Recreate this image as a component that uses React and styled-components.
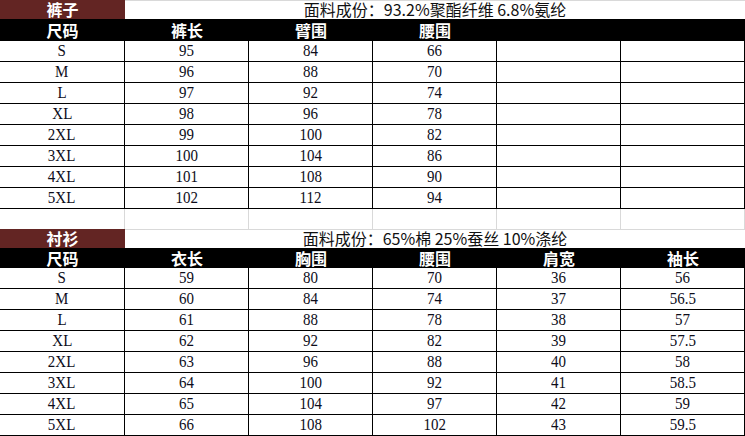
import React from 'react'
import styled, { createGlobalStyle } from 'styled-components'

const GlobalStyle = createGlobalStyle`
  html, body {
    margin: 0;
    padding: 0;
    background: #ffffff;
  }
  body {
    font-family: "Liberation Serif", "Noto Sans CJK SC", serif;
  }
`

const Sheet = styled.div`
  width: 745px;
  height: 436px;
  overflow: hidden;
  display: flex;
  flex-direction: column;
  background: #ffffff;
`

const TitleRow = styled.div`
  display: flex;
  height: 19px;
`

const TitleCell = styled.div`
  width: 125px;
  background-color: #632523;
  color: #ffffff;
  font-family: "Noto Sans CJK SC", sans-serif;
  font-weight: 700;
  font-size: 16px;
  line-height: 19px;
  text-align: center;
`

const FabricCell = styled.div`
  flex: 1;
  box-sizing: border-box;
  border-top: 1px solid #d9d9d9;
  color: #111111;
  font-family: "Noto Sans CJK SC", sans-serif;
  font-size: 16px;
  line-height: 17px;
  text-align: center;
  white-space: pre;
`

const HeaderRow = styled.div`
  display: flex;
  height: ${props => props.height}px;
  background-color: #000000;
`

const HeaderCell = styled.div`
  width: ${props => (props.first ? 125 : 124)}px;
  color: #ffffff;
  font-family: "Noto Sans CJK SC", sans-serif;
  font-weight: 700;
  font-size: 16px;
  line-height: ${props => props.height}px;
  text-align: center;
`

const DataRow = styled.div`
  display: flex;
  height: 21px;
`

const DataCell = styled.div`
  box-sizing: border-box;
  width: ${props => (props.first ? 125 : 124)}px;
  height: 21px;
  border-bottom: 1px solid #000000;
  border-right: 1px solid #000000;
  display: flex;
  align-items: center;
  justify-content: center;
`

const Value = styled.span`
  display: inline-block;
  font-family: "Liberation Serif", serif;
  font-size: 17px;
  line-height: 20px;
  color: #0d0d1a;
  transform: scaleX(0.88);
`

const SpacerRow = styled.div`
  display: flex;
  height: 20px;
`

const SpacerCell = styled.div`
  box-sizing: border-box;
  width: ${props => (props.first ? 125 : 124)}px;
  border-right: 1px solid #d9d9d9;
`

const pants = {
  title: '裤子',
  fabric: '面料成份：93.2%聚酯纤维 6.8%氨纶',
  headerHeight: 22,
  columns: ['尺码', '裤长', '臂围', '腰围', '', ''],
  rows: [
    ['S', '95', '84', '66', '', ''],
    ['M', '96', '88', '70', '', ''],
    ['L', '97', '92', '74', '', ''],
    ['XL', '98', '96', '78', '', ''],
    ['2XL', '99', '100', '82', '', ''],
    ['3XL', '100', '104', '86', '', ''],
    ['4XL', '101', '108', '90', '', ''],
    ['5XL', '102', '112', '94', '', ''],
  ],
}

const shirt = {
  title: '衬衫',
  fabric: '面料成份：65%棉 25%蚕丝 10%涤纶',
  headerHeight: 20,
  columns: ['尺码', '衣长', '胸围', '腰围', '肩宽', '袖长'],
  rows: [
    ['S', '59', '80', '70', '36', '56'],
    ['M', '60', '84', '74', '37', '56.5'],
    ['L', '61', '88', '78', '38', '57'],
    ['XL', '62', '92', '82', '39', '57.5'],
    ['2XL', '63', '96', '88', '40', '58'],
    ['3XL', '64', '100', '92', '41', '58.5'],
    ['4XL', '65', '104', '97', '42', '59'],
    ['5XL', '66', '108', '102', '43', '59.5'],
  ],
}

const SizeTable = ({ table }) => (
  <>
    <TitleRow>
      <TitleCell>{table.title}</TitleCell>
      <FabricCell>{table.fabric}</FabricCell>
    </TitleRow>
    <HeaderRow height={table.headerHeight}>
      {table.columns.map((col, ix) => (
        <HeaderCell key={ix} first={ix === 0} height={table.headerHeight}>
          {col}
        </HeaderCell>
      ))}
    </HeaderRow>
    {table.rows.map((row, rx) => (
      <DataRow key={rx}>
        {row.map((val, cx) => (
          <DataCell key={cx} first={cx === 0}>
            <Value>{val}</Value>
          </DataCell>
        ))}
      </DataRow>
    ))}
  </>
)

const App = () => (
  <>
    <GlobalStyle />
    <Sheet>
      <SizeTable table={pants} />
      <SpacerRow>
        {[0, 1, 2, 3, 4, 5].map(ix => (
          <SpacerCell key={ix} first={ix === 0} />
        ))}
      </SpacerRow>
      <SizeTable table={shirt} />
    </Sheet>
  </>
)

export default App
